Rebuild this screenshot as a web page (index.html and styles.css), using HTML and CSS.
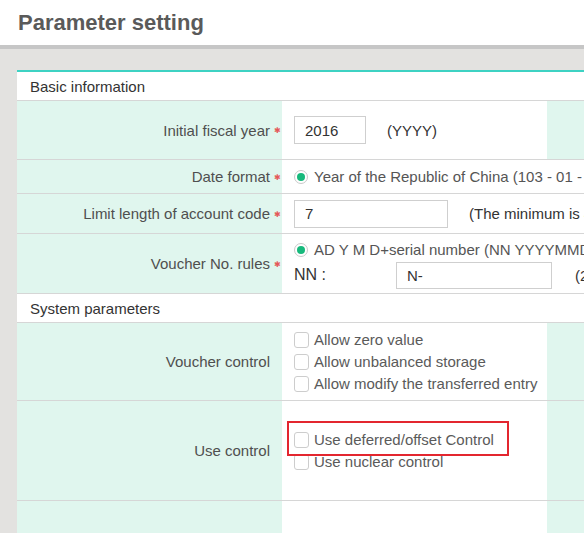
FILE: index.html
```html
<!DOCTYPE html>
<html lang="en">
<head>
<meta charset="utf-8">
<title>Parameter setting</title>
<link rel="stylesheet" href="styles.css">
</head>
<body>
<header class="page-head">
  <h1 class="page-title">Parameter setting</h1>
</header>
<main class="page-body">
  <section class="card">
    <div class="grid">
      <div class="section-row h-sec">Basic information</div>

      <div class="label h-r1">Initial fiscal year<span class="req">✱</span></div>
      <div class="value h-r1">
        <span class="input w-year">2016</span>
        <span class="hint">(YYYY)</span>
      </div>
      <div class="label h-r1"></div>
      <div class="value h-r1"></div>

      <div class="label h-r2">Date format<span class="req">✱</span></div>
      <div class="value wide h-r2">
        <span class="option"><span class="radio"></span>Year of the Republic of China (103 - 01 - 01)</span>
      </div>

      <div class="label h-r3">Limit length of account code<span class="req">✱</span></div>
      <div class="value wide h-r3">
        <span class="input w-code">7</span>
        <span class="hint">(The minimum is 4)</span>
      </div>

      <div class="label h-r4">Voucher No. rules<span class="req">✱</span></div>
      <div class="value wide h-r4 stack">
        <span class="option"><span class="radio"></span>AD Y M D+serial number (NN YYYYMMDD0001)</span>
        <span class="nn-line">
          <span class="nn-label">NN :</span>
          <span class="input w-nn">N-</span>
          <span class="hint">(2 characters)</span>
        </span>
      </div>

      <div class="section-row h-sec">System parameters</div>

      <div class="label h-r5">Voucher control</div>
      <div class="value h-r5 stack">
        <span class="option check-line"><span class="checkbox"></span>Allow zero value</span>
        <span class="option check-line"><span class="checkbox"></span>Allow unbalanced storage</span>
        <span class="option check-line"><span class="checkbox"></span>Allow modify the transferred entry</span>
      </div>
      <div class="label h-r5"></div>
      <div class="value h-r5"></div>

      <div class="label h-r6">Use control</div>
      <div class="value h-r6 stack">
        <span class="option check-line marked"><span class="checkbox"></span>Use deferred/offset Control</span>
        <span class="option check-line"><span class="checkbox"></span>Use nuclear control</span>
      </div>
      <div class="label h-r6"></div>
      <div class="value h-r6"></div>

      <div class="label h-r7"></div>
      <div class="value h-r7"></div>
      <div class="label h-r7"></div>
      <div class="value h-r7"></div>
    </div>
  </section>
</main>
</body>
</html>
```

FILE: styles.css
```css
* { box-sizing: border-box; }

html, body {
  margin: 0;
  padding: 0;
  overflow: hidden;
}

body {
  font-family: "Liberation Sans", Arial, sans-serif;
  font-size: 15px;
  color: #333;
  background: #e3e2e0;
  width: 584px;
  height: 533px;
}

.page-head {
  background: #fff;
  height: 49px;
  border-bottom: 4px solid #c6c6c6;
  padding: 10px 0 0 18px;
}

.page-title {
  margin: 0;
  font-size: 22px;
  line-height: 26px;
  font-weight: bold;
  color: #5a5a5a;
}

.page-body {
  padding: 21px 0 0 17px;
}

.card {
  width: 1100px;
  background: #fff;
  border-top: 2px solid #3dd2c3;
}

.grid {
  display: grid;
  grid-template-columns: 265px 265px 265px 305px;
}

.section-row {
  grid-column: 1 / -1;
  display: flex;
  align-items: center;
  padding-left: 13px;
  background: #fff;
  color: #333;
  border-bottom: 1px solid #d6d6d6;
}

.label,
.value {
  border-bottom: 1px solid #d6d6d6;
  display: flex;
  align-items: center;
}

.label {
  background: #e0f6ee;
  justify-content: flex-end;
  padding-right: 12px;
  color: #4f4f4f;
  white-space: nowrap;
}

.value {
  background: #fff;
  padding-left: 12px;
  white-space: nowrap;
  color: #555;
}

.value.wide {
  grid-column: 2 / -1;
}

.stack {
  flex-direction: column;
  align-items: flex-start;
  justify-content: center;
}

.h-sec { height: 29px; }
.h-r1 { height: 59px; }
.h-r2 { height: 34px; }
.h-r3 { height: 40px; }
.h-r4 { height: 60px; }
.h-r5 { height: 78px; }
.h-r6 { height: 100px; }
.h-r7 { height: 60px; }

.req {
  display: inline-block;
  width: 6px;
  margin-left: 4px;
  margin-right: -10px;
  color: #e45a5a;
  font-family: "DejaVu Sans", sans-serif;
  font-size: 8px;
  line-height: 1;
  position: relative;
  top: 1px;
}

.input {
  display: inline-flex;
  align-items: center;
  height: 28px;
  border: 1px solid #cfcfcf;
  background: #fff;
  padding-left: 10px;
  color: #333;
}

.w-year { width: 72px; }
.w-code { width: 154px; }
.w-nn { width: 156px; height: 27px; }

.hint {
  margin-left: 21px;
  color: #333;
}

.option {
  display: inline-flex;
  align-items: center;
  height: 22px;
  color: #555;
}

.radio {
  width: 14px;
  height: 14px;
  border: 1px solid #c9c9c9;
  border-radius: 50%;
  margin-right: 6px;
  display: inline-flex;
  align-items: center;
  justify-content: center;
  background: #fff;
}

.radio::after {
  content: "";
  width: 8px;
  height: 8px;
  border-radius: 50%;
  background: #17b97c;
}

.nn-line {
  display: inline-flex;
  align-items: center;
  margin-top: 1px;
  color: #333;
}

.nn-label {
  width: 102px;
  font-size: 16px;
  color: #333;
}

.nn-line .hint { margin-left: 23px; }

.checkbox {
  width: 15px;
  height: 16px;
  border: 1px solid #cdcdcd;
  border-radius: 3px;
  background: #fff;
  margin-right: 5px;
}

.check-line { color: #5a5a5a; }

.marked {
  position: relative;
  z-index: 1;
}

.marked::after {
  content: "";
  position: absolute;
  left: -7px;
  right: -15px;
  top: -8px;
  bottom: -5px;
  border: 2px solid #e3262f;
}
```
